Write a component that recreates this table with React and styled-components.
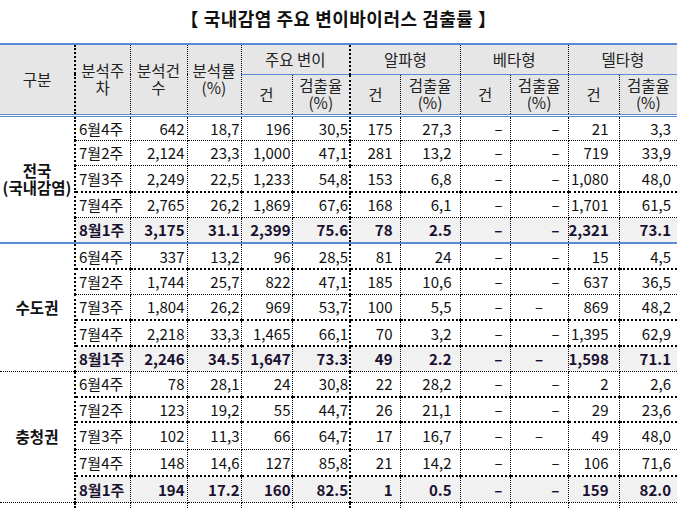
import React from "react";
import styled, { createGlobalStyle } from "styled-components";

const BLUE = "#5b8ad6";

const GlobalStyle = createGlobalStyle`
  html, body {
    margin: 0;
    padding: 0;
    background: #ffffff;
  }
  body {
    font-family: "Noto Sans CJK KR", "Noto Sans", sans-serif;
    color: #111;
  }
`;

const Page = styled.div`
  width: 677px;
  height: 508px;
  overflow: hidden;
`;

const Title = styled.h1`
  margin: 0;
  height: 43px;
  line-height: 37px;
  text-align: center;
  font-size: 18px;
  font-weight: 700;
  color: #111;
  letter-spacing: 0.5px;
`;

const Table = styled.table`
  width: 677px;
  border-collapse: collapse;
  table-layout: fixed;
  border-top: 2px solid ${BLUE};
  font-size: 15px;
`;

const lineFor = (kind) => {
  switch (kind) {
    case "thick":
      return "2px dotted #000";
    case "thin":
      return "1px dotted #000";
    case "blue":
      return `2px solid ${BLUE}`;
    case "blueThin":
      return `1px solid ${BLUE}`;
    case "double":
      return `3px double ${BLUE}`;
    default:
      return "none";
  }
};

const HeadCell = styled.th`
  background: #e6e6e6;
  font-weight: 400;
  font-size: 15.5px;
  line-height: 17px;
  color: #222;
  padding: 0;
  text-align: center;
  vertical-align: middle;
  white-space: nowrap;
  border-right: ${({ $right }) => lineFor($right || "thin")};
  border-bottom: ${({ $bottom }) => lineFor($bottom || "double")};
`;

const HeadRow = styled.tr`
  height: ${({ $h }) => $h}px;
`;

const Row = styled.tr`
  height: ${({ $h }) => $h || 25}px;
  background: ${({ $shade }) => ($shade ? "#f1f1f1" : "#fff")};
`;

const GroupCell = styled.td`
  background: #fff;
  text-align: center;
  vertical-align: middle;
  font-weight: 700;
  font-size: 15.5px;
  line-height: 17px;
  color: #111;
  padding: 0;
  border-right: 2px dotted #000;
  border-bottom: ${({ $bottom }) => lineFor($bottom)};
`;

const WeekCell = styled.td`
  padding: 0 0 0 3px;
  text-align: left;
  white-space: nowrap;
  overflow: hidden;
  font-weight: ${({ $bold }) => ($bold ? 700 : 400)};
  color: ${({ $bold }) => ($bold ? "#1b1030" : "#111")};
  border-right: 1px dotted #000;
  border-bottom: ${({ $bottom }) => lineFor($bottom)};
`;

const NumCell = styled.td`
  padding: 0 ${({ $pr }) => $pr}px 0 0;
  text-align: ${({ $center }) => ($center ? "center" : "right")};
  white-space: nowrap;
  overflow: hidden;
  font-weight: ${({ $bold }) => ($bold ? 700 : 400)};
  color: ${({ $bold }) => ($bold ? "#1b1030" : "#111")};
  border-right: ${({ $right }) => lineFor($right)};
  border-bottom: ${({ $bottom }) => lineFor($bottom)};
`;

const widths = [75, 55, 57, 54, 51, 58, 50, 60, 50, 58, 51, 58];
// right padding + right border for columns 2..11
const numCols = [
  { pr: 2, right: "thin" },
  { pr: 1, right: "thin" },
  { pr: 1, right: "thin" },
  { pr: 1, right: "thick" },
  { pr: 7, right: "thin" },
  { pr: 8, right: "thin" },
  { pr: 7, right: "thin" },
  { pr: 8, right: "thin" },
  { pr: 10, right: "thin" },
  { pr: 6, right: "none" },
];

const D = "–";

const sections = [
  {
    label: ["전국", "(국내감염)"],
    bottom: "blue",
    lines: ["thin", "thin", "thick", "thin"],
    heights: [25, 25, 27, 25, 26],
    rows: [
      ["6월4주", "642", "18,7", "196", "30,5", "175", "27,3", D, D, "21", "3,3"],
      ["7월2주", "2,124", "23,3", "1,000", "47,1", "281", "13,2", D, D, "719", "33,9"],
      ["7월3주", "2,249", "22,5", "1,233", "54,8", "153", "6,8", D, D, "1,080", "48,0"],
      ["7월4주", "2,765", "26,2", "1,869", "67,6", "168", "6,1", D, D, "1,701", "61,5"],
      ["8월1주", "3,175", "31.1", "2,399", "75.6", "78", "2.5", D, D, "2,321", "73.1"],
    ],
  },
  {
    label: ["수도권"],
    bottom: "thin",
    lines: ["thick", "thin", "thick", "thick"],
    heights: [26, 25, 26, 26, 25],
    centerBeta: [2, 4],
    rows: [
      ["6월4주", "337", "13,2", "96", "28,5", "81", "24", D, D, "15", "4,5"],
      ["7월2주", "1,744", "25,7", "822", "47,1", "185", "10,6", D, D, "637", "36,5"],
      ["7월3주", "1,804", "26,2", "969", "53,7", "100", "5,5", D, D, "869", "48,2"],
      ["7월4주", "2,218", "33,3", "1,465", "66,1", "70", "3,2", D, D, "1,395", "62,9"],
      ["8월1주", "2,246", "34.5", "1,647", "73.3", "49", "2.2", D, D, "1,598", "71.1"],
    ],
  },
  {
    label: ["충청권"],
    bottom: "thin",
    lines: ["thick", "thick", "thin", "thick"],
    heights: [26, 25, 27, 27, 26],
    centerBeta: [2],
    rows: [
      ["6월4주", "78", "28,1", "24", "30,8", "22", "28,2", D, D, "2", "2,6"],
      ["7월2주", "123", "19,2", "55", "44,7", "26", "21,1", D, D, "29", "23,6"],
      ["7월3주", "102", "11,3", "66", "64,7", "17", "16,7", D, D, "49", "48,0"],
      ["7월4주", "148", "14,6", "127", "85,8", "21", "14,2", D, D, "106", "71,6"],
      ["8월1주", "194", "17.2", "160", "82.5", "1", "0.5", D, D, "159", "82.0"],
    ],
  },
  {
    label: [],
    bottom: "thin",
    lines: [],
    heights: [25],
    rows: [["6월4주", "46", "16,0", "14", "30,4", "4", "10,0", D, D, "6", "7,1"]],
  },
];

const SubHead = ({ children }) => (
  <>
    {children[0]}
    <br />
    {children[1]}
  </>
);

const Section = ({ section }) => {
  const { rows, lines, bottom, heights, centerBeta = [], label } = section;
  return rows.map((cells, i) => {
    const last = i === rows.length - 1;
    const rowBottom = last ? bottom : lines[i];
    const bold = cells[0] === "8월1주";
    const centered = centerBeta.includes(i);
    return (
      <Row key={i} $h={heights[i]} $shade={bold}>
        {i === 0 && (
          <GroupCell rowSpan={rows.length} $bottom={bottom}>
            {label.map((l, k) => (
              <div key={k}>{l}</div>
            ))}
          </GroupCell>
        )}
        <WeekCell $bold={bold} $bottom={rowBottom}>
          {cells[0]}
        </WeekCell>
        {cells.slice(1).map((v, c) => (
          <NumCell
            key={c}
            $pr={c === 7 && centered ? 0 : numCols[c].pr}
            $center={c === 7 && centered}
            $right={numCols[c].right}
            $bottom={rowBottom}
            $bold={bold}
          >
            {v}
          </NumCell>
        ))}
      </Row>
    );
  });
};

const Rate = () => <SubHead>{["검출율", "(%)"]}</SubHead>;

export default function App() {
  return (
    <Page>
      <GlobalStyle />
      <Title>【 국내감염 주요 변이바이러스 검출률 】</Title>
      <Table>
        <colgroup>
          {widths.map((w, i) => (
            <col key={i} style={{ width: w }} />
          ))}
        </colgroup>
        <thead>
          <HeadRow $h={30}>
            <HeadCell rowSpan={2} $right="thick">구분</HeadCell>
            <HeadCell rowSpan={2}>
              <SubHead>{["분석주", "차"]}</SubHead>
            </HeadCell>
            <HeadCell rowSpan={2}>
              <SubHead>{["분석건", "수"]}</SubHead>
            </HeadCell>
            <HeadCell rowSpan={2}>
              <SubHead>{["분석률", "(%)"]}</SubHead>
            </HeadCell>
            <HeadCell colSpan={2} $right="thick" $bottom="blueThin">
              주요 변이
            </HeadCell>
            <HeadCell colSpan={2} $bottom="blueThin">알파형</HeadCell>
            <HeadCell colSpan={2} $bottom="blueThin">베타형</HeadCell>
            <HeadCell colSpan={2} $right="none" $bottom="blueThin">
              델타형
            </HeadCell>
          </HeadRow>
          <HeadRow $h={41}>
            <HeadCell>건</HeadCell>
            <HeadCell $right="thick">
              <Rate />
            </HeadCell>
            <HeadCell>건</HeadCell>
            <HeadCell>
              <Rate />
            </HeadCell>
            <HeadCell>건</HeadCell>
            <HeadCell>
              <Rate />
            </HeadCell>
            <HeadCell>건</HeadCell>
            <HeadCell $right="none">
              <Rate />
            </HeadCell>
          </HeadRow>
        </thead>
        <tbody>
          {sections.map((s, i) => (
            <Section key={i} section={s} />
          ))}
        </tbody>
      </Table>
    </Page>
  );
}
